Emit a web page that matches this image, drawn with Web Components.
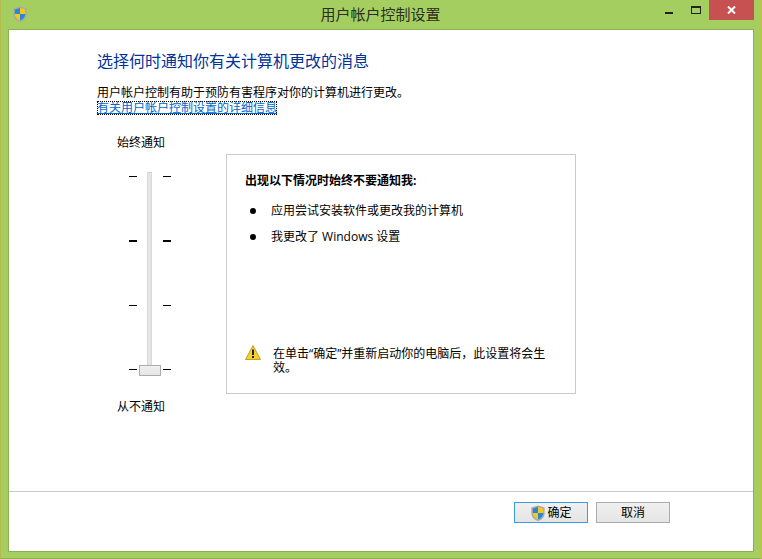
<!DOCTYPE html>
<html lang="zh">
<head>
<meta charset="utf-8">
<title>用户帐户控制设置</title>
<style>
    html, body { margin: 0; padding: 0; height: 100%; }
    body { font: 12px/14px "Open Sans", "Noto Sans CJK SC", sans-serif; color: #000; overflow: hidden; }
</style>
</head>
<body>
<uac-window heading="用户帐户控制设置">
    <uac-intro></uac-intro>
    <div slot="main" style="display:contents">
        <uac-slider></uac-slider>
        <uac-panel></uac-panel>
    </div>
    <uac-button slot="footer" shield primary>确定</uac-button>
    <uac-button slot="footer">取消</uac-button>
</uac-window>

<script>
(function () {
    const SHIELD = `
        <path d="M8 .6 14.6 2.6V8.4C14.6 12.2 11.6 14.8 8 16 4.4 14.8 1.400 12.200 1.400 8.400V2.600Z" fill="#a9aaa6"/>
        <path d="M8 2 8 8H2.800V3.500Z" fill="#2b86d8"/>
        <path d="M8 2 13.200 3.500V8H8Z" fill="#f6c81f"/>
        <path d="M2.800 8H8V14.400C5.200 13.300 2.800 11.300 2.800 8Z" fill="#f6c81f"/>
        <path d="M8 8H13.200C13.200 11.300 10.800 13.300 8 14.400Z" fill="#2b86d8"/>`

    const windowTemplate = document.createElement("template")
    windowTemplate.innerHTML = `
        <style>
        :host {
            display: flex;
            flex-direction: column;
            box-sizing: border-box;
            width: 762px;
            height: 559px;
            background: #a5ce60;
            border-left: 1px solid #b4bb4c;
            border-right: 2px solid #bcc44e;
            border-bottom: 1px solid #8fb052;
            padding: 0 6px 6px 7px;
        }
        .bar {
            flex: none;
            height: 29px;
            display: grid;
            grid-template-columns: 30px 1fr 30px;
            margin: 0 -6px 0 -7px;
            position: relative;
        }
        .logo { width: 16px; height: 16px; margin: 6px 0 0 11px; }
        .title {
            text-align: center;
            font-size: 15px;
            line-height: 20px;
            padding-top: 4px;
            color: #2b2f26;
        }
        .ctrls {
            position: absolute;
            top: 0;
            right: 6px;
            display: flex;
            height: 20px;
        }
        .ctrl { display: flex; align-items: flex-start; justify-content: center; }
        .min { width: 28px; }
        .min i { display: block; width: 8px; height: 2px; margin-top: 12px; background: #222; }
        .max { width: 26px; }
        .max i { display: block; box-sizing: border-box; width: 10px; height: 8px; margin-top: 6px; border: 1px solid #222; border-top-width: 2px; }
        .close { width: 45px; height: 20px; background: #c75050; }
        .close svg { margin-top: 6px; }
        .client {
            flex: 1;
            display: flex;
            flex-direction: column;
            background: #fff;
            border: 1px solid #8eae58;
            min-height: 0;
        }
        .content { flex: 1; padding: 21px 0 0 88px; min-height: 0; }
        .main { display: flex; margin-top: 21px; }
        .footer {
            flex: none;
            height: 60px;
            box-sizing: border-box;
            border-top: 1px solid #cbcbcb;
            display: flex;
            justify-content: flex-end;
            gap: 8px;
            padding: 10px 83px 0 0;
        }
        </style>
        <header class="bar">
            <svg class="logo" viewBox="0 0 16 16">${SHIELD}</svg>
            <div class="title"></div>
            <div class="ctrls">
                <div class="ctrl min"><i></i></div>
                <div class="ctrl max"><i></i></div>
                <div class="ctrl close">
                    <svg width="9" height="8" viewBox="0 0 9 8"><path d="M1 .5 8 7.500M8 .5 1 7.500" stroke="#fff" stroke-width="2"/></svg>
                </div>
            </div>
        </header>
        <div class="client">
            <div class="content">
                <slot></slot>
                <div class="main"><slot name="main"></slot></div>
            </div>
            <footer class="footer"><slot name="footer"></slot></footer>
        </div>`

    class UacWindow extends HTMLElement {
        constructor() {
            super()
            this.attachShadow({ mode: "open" }).appendChild(windowTemplate.content.cloneNode(true))
            this.shadowRoot.querySelector(".title").textContent = this.getAttribute("heading")
        }
    }

    const introTemplate = document.createElement("template")
    introTemplate.innerHTML = `
        <style>
        :host { display: block; }
        h1 {
            margin: 0 0 15px;
            font-size: 16px;
            font-weight: 400;
            line-height: 20px;
            color: #003399;
        }
        p { margin: 0 0 1px; line-height: 14px; }
        a {
            display: inline-block;
            color: #0066cc;
            text-decoration: underline;
            outline: 1px dotted #000;
            outline-offset: -1px;
            line-height: 14px;
        }
        </style>
        <h1>选择何时通知你有关计算机更改的消息</h1>
        <p>用户帐户控制有助于预防有害程序对你的计算机进行更改。</p>
        <a href="#">有关用户帐户控制设置的详细信息</a>`

    class UacIntro extends HTMLElement {
        constructor() {
            super()
            this.attachShadow({ mode: "open" }).appendChild(introTemplate.content.cloneNode(true))
        }
    }

    const sliderTemplate = document.createElement("template")
    sliderTemplate.innerHTML = `
        <style>
        :host {
            display: flex;
            flex-direction: column;
            flex: none;
            width: 129px;
        }
        .label { margin-left: 20px; width: 60px; line-height: 14px; }
        .scale {
            position: relative;
            display: grid;
            grid-template-columns: 8px 26px 8px;
            justify-content: start;
            margin: 21px 0 0 32px;
            height: 205px;
        }
        .ticks {
            display: flex;
            flex-direction: column;
            justify-content: space-between;
            padding: 5px 0 5px;
            height: 194px;
        }
        .ticks i { display: block; height: 1px; background: #000; }
        .ticks i.bold { height: 2px; margin-bottom: -1px; }
        .track {
            justify-self: center;
            box-sizing: border-box;
            width: 5px;
            height: 204px;
            margin: 1px 0 0 -1px;
            background: #e3e6e3;
            border: 1px solid #d9dad9;
            border-top-color: #d0d0d0;
        }
        .thumb {
            position: absolute;
            left: 10px;
            top: 194px;
            box-sizing: border-box;
            width: 22px;
            height: 11px;
            border: 1px solid #acacac;
            background: linear-gradient(#f0f0f0, #e5e5e5);
        }
        .label.end { margin-top: 24px; }
        </style>
        <div class="label">始终通知</div>
        <div class="scale">
            <div class="ticks"><i></i><i class="bold"></i><i></i><i></i></div>
            <div class="track"></div>
            <div class="ticks"><i></i><i class="bold"></i><i></i><i></i></div>
            <div class="thumb"></div>
        </div>
        <div class="label end">从不通知</div>`

    class UacSlider extends HTMLElement {
        constructor() {
            super()
            this.attachShadow({ mode: "open" }).appendChild(sliderTemplate.content.cloneNode(true))
        }
    }

    const panelTemplate = document.createElement("template")
    panelTemplate.innerHTML = `
        <style>
        :host {
            display: flex;
            flex-direction: column;
            flex: none;
            box-sizing: border-box;
            width: 350px;
            height: 240px;
            margin-top: 18px;
            border: 1px solid #cbcbcb;
            padding: 19px 18px 18px;
        }
        h2 { margin: 0 0 16px; font-size: 12px; line-height: 14px; font-weight: 700; }
        ul { margin: 0; padding: 0; list-style: none; display: flex; flex-direction: column; gap: 12px; }
        li { display: flex; align-items: center; line-height: 14px; }
        li::before {
            content: "";
            width: 6px;
            height: 6px;
            margin: 0 15px 0 5px;
            border-radius: 50%;
            background: #000;
        }
        .note { margin-top: auto; display: flex; gap: 12px; }
        .note svg { flex: none; width: 16px; height: 15px; margin-top: -2px; }
        .note span { width: 280px; line-height: 14px; }
        </style>
        <h2>出现以下情况时始终不要通知我:</h2>
        <ul>
            <li>应用尝试安装软件或更改我的计算机</li>
            <li>我更改了 Windows 设置</li>
        </ul>
        <div class="note">
            <svg viewBox="0 0 16 15">
                <path d="M8 .5 15.500 14.500H.5Z" fill="#f3d22e" stroke="#c3a123" stroke-linejoin="round"/>
                <rect x="7" y="4.500" width="2" height="5.500" fill="#222"/>
                <rect x="7" y="11" width="2" height="2" fill="#222"/>
            </svg>
            <span>在单击“确定”并重新启动你的电脑后，此设置将会生效。</span>
        </div>`

    class UacPanel extends HTMLElement {
        constructor() {
            super()
            this.attachShadow({ mode: "open" }).appendChild(panelTemplate.content.cloneNode(true))
        }
    }

    const buttonTemplate = document.createElement("template")
    buttonTemplate.innerHTML = `
        <style>
        :host {
            display: flex;
            align-items: center;
            justify-content: center;
            gap: 1px;
            box-sizing: border-box;
            width: 74px;
            height: 21px;
            border: 1px solid #acacac;
            background: linear-gradient(#f0f0f0, #e5e5e5);
            line-height: 14px;
        }
        :host([primary]) { border-color: #3c9aea; }
        svg { display: none; width: 16px; height: 16px; }
        :host([shield]) svg { display: block; }
        </style>
        <svg viewBox="0 0 16 16">${SHIELD}</svg>
        <slot></slot>`

    class UacButton extends HTMLElement {
        constructor() {
            super()
            this.attachShadow({ mode: "open" }).appendChild(buttonTemplate.content.cloneNode(true))
        }
    }

    customElements.define("uac-window", UacWindow)
    customElements.define("uac-intro", UacIntro)
    customElements.define("uac-slider", UacSlider)
    customElements.define("uac-panel", UacPanel)
    customElements.define("uac-button", UacButton)
})()
</script>
</body>
</html>
